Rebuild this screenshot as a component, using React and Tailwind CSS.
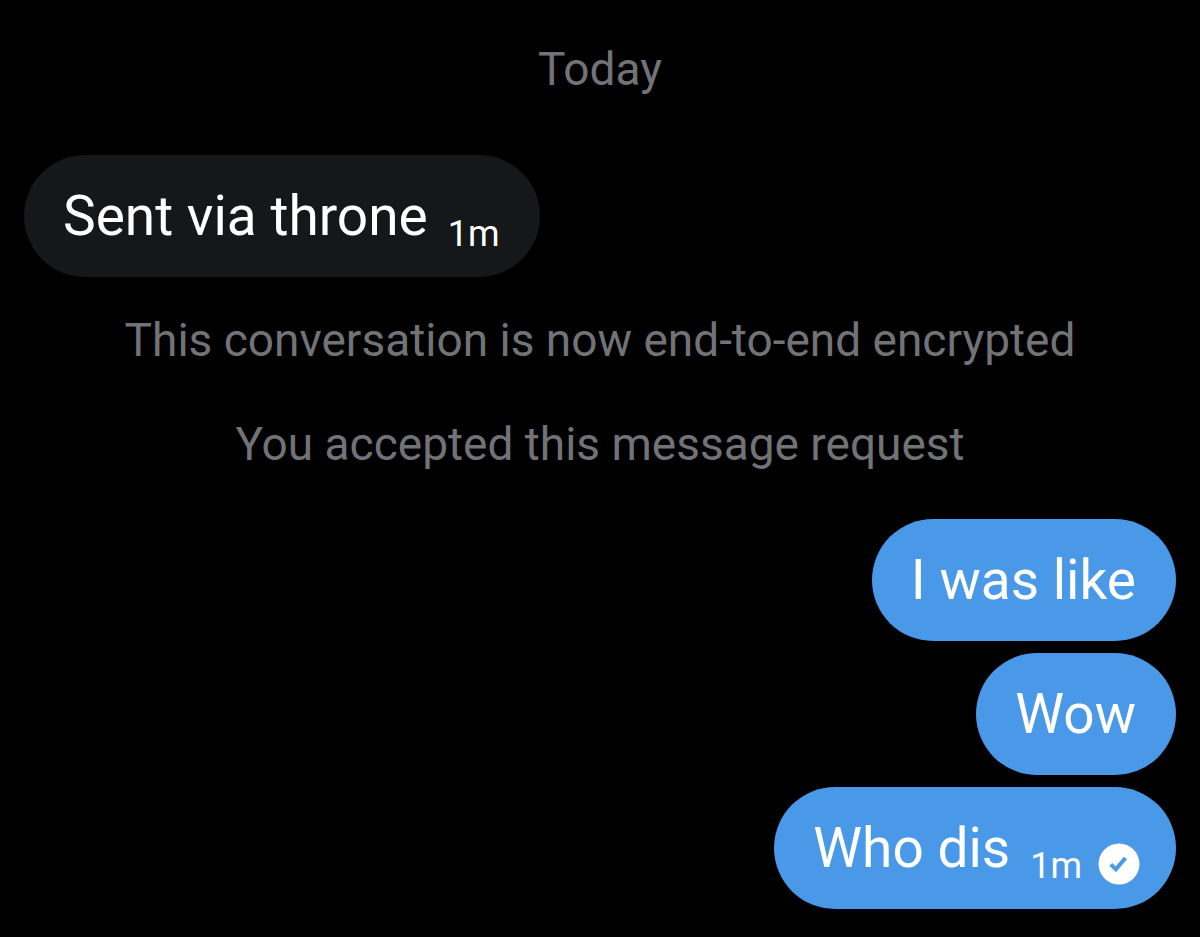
const notice = "text-center text-[46px] leading-[56px] text-[#717377]";
const bubble = "flex h-[122px] items-center rounded-full pl-[39px] text-[55px] leading-[64px] text-white";
const stamp = "ml-5 mt-[36px] text-[36px] leading-[44px]";

function Check() {
  return (
    <svg viewBox="0 0 42 42" className="ml-4 mt-[32px] size-[42px]" role="img" aria-label="Delivered">
      <circle cx="21" cy="21" r="20.5" fill="#fff" />
      <path d="M12.8 21.4 L17.9 26.4 L27.4 15" fill="none" stroke="#4a99e9" strokeWidth="4" />
    </svg>
  );
}

export default function App() {
  return (
    <main className="min-h-screen bg-black px-6 pt-[41px] pb-7 font-['Roboto',sans-serif]">
      <p className={notice}>Today</p>
      <div className="mt-[58px] flex justify-start">
        <div className={`${bubble} bg-[#161719] pr-10`}>
          <span>Sent via throne</span>
          <time className={stamp}>1m</time>
        </div>
      </div>
      <p className={`${notice} mt-[35px]`}>This conversation is now end-to-end encrypted</p>
      <p className={`${notice} mt-[48px]`}>You accepted this message request</p>
      <div className="mt-[47px] flex flex-col items-end gap-3">
        <div className={`${bubble} bg-[#4a99e9] pr-10`}>I was like</div>
        <div className={`${bubble} bg-[#4a99e9] pr-10`}>Wow</div>
        <div className={`${bubble} bg-[#4a99e9] pr-9`}>
          <span>Who dis</span>
          <time className={stamp}>1m</time>
          <Check />
        </div>
      </div>
    </main>
  );
}
